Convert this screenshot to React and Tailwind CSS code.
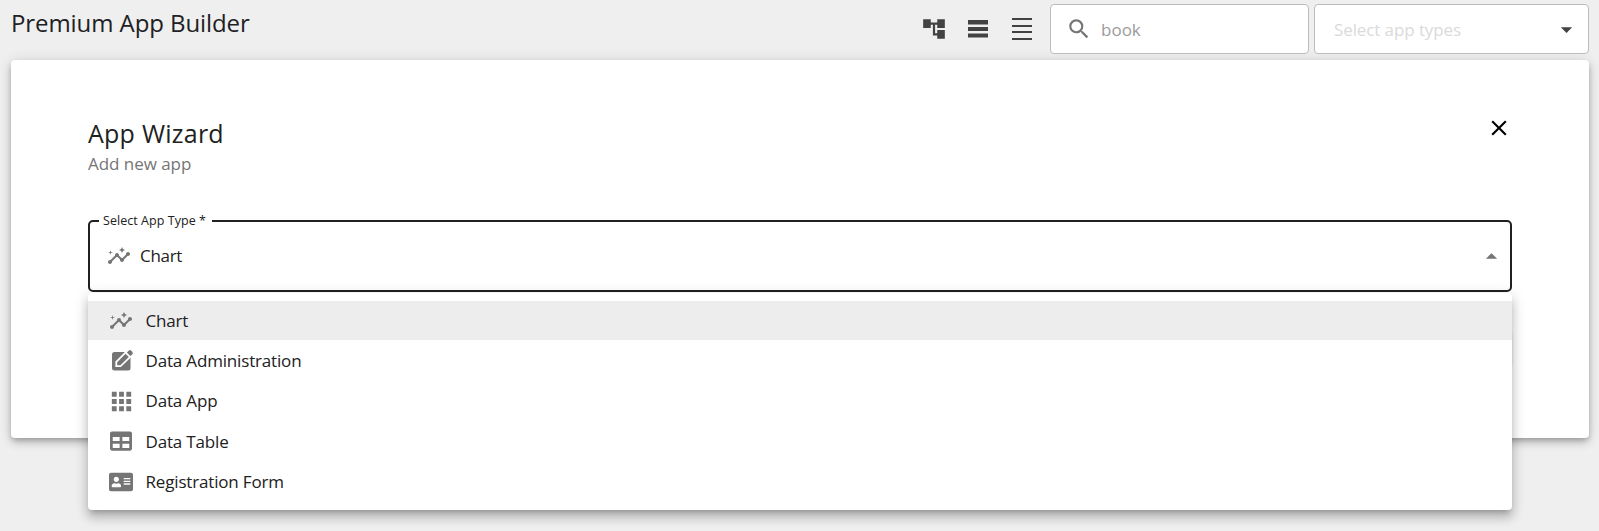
import { MdAccountTree, MdApps, MdArrowDropDown, MdArrowDropUp, MdInsights, MdSearch } from "react-icons/md";
import { FaAddressCard, FaTable } from "react-icons/fa";
import { IoMdClose } from "react-icons/io";

const APP_TYPES = [
    { label: "Chart", icon: <MdInsights size={24} /> },
    { label: "Data Administration", icon: <EditBoxIcon /> },
    { label: "Data App", icon: <MdApps size={29} /> },
    { label: "Data Table", icon: <FaTable size={22} /> },
    { label: "Registration Form", icon: <FaAddressCard size={24} /> },
];

function EditBoxIcon() {
    return (
        <svg width="24" height="24" viewBox="0 0 24 24" className="relative left-px">
            <rect x="2" y="3" width="18.5" height="18.5" rx="2.5" fill="currentColor" />
            <path d="M5.4 17.9v-5.4L16.4 1.5 23 6.5 10.8 17.9z" fill="#fff" />
            <path d="M7.2 16.2v-3l8.4-8.4 3.2 3.2-8.4 8.2z" fill="currentColor" />
            <path d="M16.9 3.5 18.6 1.8a1.9 1.9 0 0 1 2.7 0l.9.9a1.9 1.9 0 0 1 0 2.7L20.3 7z" fill="currentColor" />
        </svg>
    );
}

function RowsIcon() {
    return (
        <svg width="22" height="24" viewBox="0 0 22 24" fill="currentColor">
            <path d="M1 3h20v4.5H1zM1 10h20v4H1zM1 16.5h20v4H1z" />
        </svg>
    );
}

function LinesIcon() {
    return (
        <svg width="22" height="24" viewBox="0 0 22 24" fill="currentColor">
            <path d="M1 1h20v2H1zM1 8h20v2H1zM1 14h20v2H1zM1 21h20v2H1z" />
        </svg>
    );
}

function Toolbar() {
    return (
        <header className="flex h-[60px] items-start pl-[11px] pr-[10px]">
            <h1 className="mt-[6px] flex-1 text-[24px] leading-[34px] tracking-[-0.08px] text-[#202124]">Premium App Builder</h1>

            <div className="mt-4 mr-[17px] flex items-center gap-[22px] text-[#424242]">
                <button aria-label="Tree view" className="-mr-[2px]"><MdAccountTree size={26} /></button>
                <button aria-label="Table view"><RowsIcon /></button>
                <button aria-label="List view"><LinesIcon /></button>
            </div>

            <div className="mt-1 mr-[5px] flex h-[50px] w-[259px] items-center rounded-[4px] border border-[#bcbcbc] bg-white pl-[15px]">
                <MdSearch size={26} className="text-[#757575]" />
                <span className="mt-px ml-[9px] text-[17px] text-[#9b9b9b]">book</span>
            </div>
            <div className="mt-1 flex h-[50px] w-[275px] items-center justify-between rounded-[4px] border border-[#bcbcbc] bg-white pl-[19px] pr-[8px]">
                <span className="mt-px text-[17px] tracking-[-0.1px] text-[#dadada]">Select app types</span>
                <MdArrowDropDown size={27} className="text-[#424242]" />
            </div>
        </header>
    );
}

function AppTypeSelect() {
    return (
        <div className="relative">
            <div className="flex h-[72px] items-center rounded-[5px] border-2 border-[#212121] pl-[17px] pr-[5px]">
                <MdInsights size={24} className="text-[#757575]" />
                <span className="ml-[9px] flex-1 text-[17px] tracking-[-0.3px]">Chart</span>
                <MdArrowDropUp size={27} className="text-[#757575]" />
            </div>
            <label className="absolute -top-[8px] left-[11px] bg-white pr-[6px] pl-1 text-[12.5px] leading-[18px] tracking-[0.05px]">Select App Type *</label>

            {/* Open menu */}
            <ul className="absolute top-[73px] left-0 z-10 h-[217px] w-full rounded-[4px] bg-white pt-2 shadow-[0_5px_5px_-3px_rgba(0,0,0,0.2),0_8px_10px_1px_rgba(0,0,0,0.14),0_3px_14px_2px_rgba(0,0,0,0.12)]">
                {APP_TYPES.map((type, i) => (
                    <li key={type.label} className={i === 0 ? "flex h-[39px] items-center bg-[#ededed] pl-[18px]" : "flex h-[40.4px] items-center pt-px pl-[18px]"}>
                        <span className="flex w-[30px] justify-center text-[#757575]">{type.icon}</span>
                        <span className="ml-[9.5px] text-[17px] tracking-[-0.17px]">{type.label}</span>
                    </li>
                ))}
            </ul>
        </div>
    );
}

export default function App() {
    return (
        <div className="h-[531px] overflow-hidden bg-[#efefef] font-['Open_Sans',sans-serif] text-[#212121]">
            <Toolbar />
            <main className="mr-[10px] ml-[11px] h-[378px] rounded-[4px] bg-white px-[77px] pt-[57px] shadow-[0_3px_5px_-1px_rgba(0,0,0,0.2),0_5px_8px_0_rgba(0,0,0,0.14),0_1px_14px_0_rgba(0,0,0,0.12)]">
                <div className="flex items-start justify-between">
                    <div>
                        <h2 className="text-[25px] leading-[32px] tracking-[0.25px]">App Wizard</h2>
                        <p className="mt-px text-[17px] leading-[27px] tracking-[-0.05px] text-[#757575]">Add new app</p>
                    </div>
                    <button aria-label="Close" className="-mt-[2px] text-black"><IoMdClose size={26} /></button>
                </div>
                <div className="pt-[43px]">
                    <AppTypeSelect />
                </div>
                <div className="mt-[38px] flex justify-end">
                    <button className="h-9 w-24 rounded-[4px] bg-[#e0e0e0] shadow" aria-label="Next" />
                </div>
            </main>
        </div>
    );
}
